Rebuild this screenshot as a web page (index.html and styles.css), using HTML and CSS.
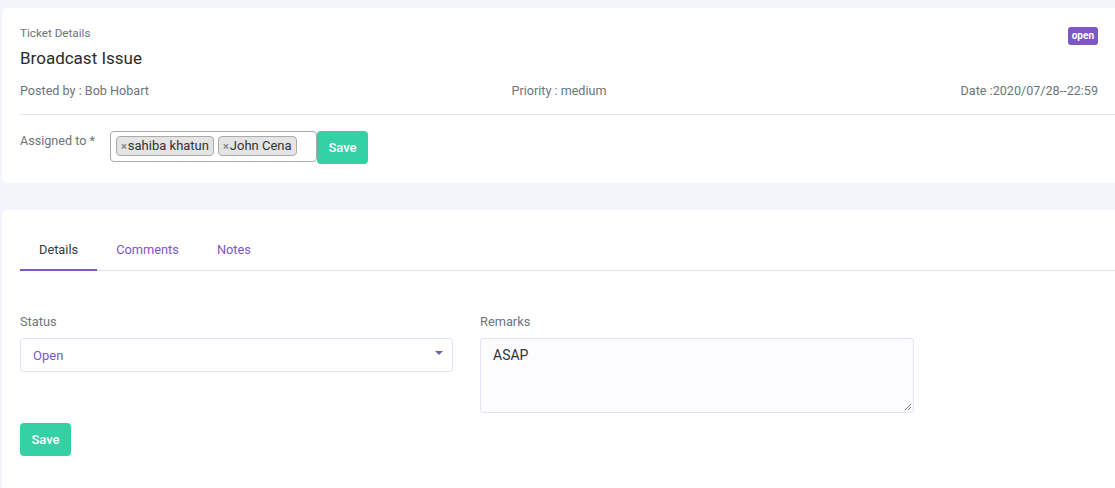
FILE: index.html
```html
<!DOCTYPE html>
<html>
<head>
<meta charset="utf-8">
<link rel="stylesheet" href="styles.css">
</head>
<body>
<div class="page">
  <section class="card ticket">
    <div class="ticket-head">
      <div>
        <div class="eyebrow">Ticket Details</div>
        <h1 class="title">Broadcast Issue</h1>
      </div>
      <span class="badge">open</span>
    </div>
    <div class="meta">
      <span>Posted by : Bob Hobart</span>
      <span class="meta-mid">Priority : medium</span>
      <span class="meta-right">Date :2020/07/28--22:59</span>
    </div>
    <div class="assign">
      <label class="assign-label">Assigned to *</label>
      <div class="multi">
        <span class="tag"><span class="x">×</span>sahiba khatun</span>
        <span class="tag"><span class="x">×</span>John Cena</span>
      </div>
      <button class="btn">Save</button>
    </div>
  </section>

  <section class="card detail">
    <nav class="tabs">
      <a class="tab active">Details</a>
      <a class="tab">Comments</a>
      <a class="tab">Notes</a>
    </nav>
    <div class="form">
      <div class="field">
        <label class="label">Status</label>
        <div class="select">
          <span>Open</span>
          <span class="caret"></span>
        </div>
      </div>
      <div class="field">
        <label class="label">Remarks</label>
        <div class="textarea">ASAP
          <svg class="grip" width="8" height="8" viewBox="0 0 8 8"><path d="M7 1L1 7M7 4L4 7" stroke="#777" stroke-width="1"/></svg>
        </div>
      </div>
    </div>
    <button class="btn">Save</button>
  </section>
</div>
</body>
</html>
```

FILE: styles.css
```css
* { box-sizing: border-box; }
html, body { margin: 0; padding: 0; }
body {
  background: #f4f5fa;
  font-family: Roboto, "Liberation Sans", Arial, sans-serif;
  color: #6c757d;
  font-size: 13px;
  height: 488px;
  overflow: hidden;
}
.page {
  padding: 8px 0 0 2px;
  display: flex;
  flex-direction: column;
  gap: 27px;
}
.card {
  background: #fff;
  border-radius: 5px 0 0 5px;
}
.ticket {
  padding: 18px 17px 0 18px;
  height: 175px;
}
.ticket-head {
  display: flex;
  justify-content: space-between;
  align-items: flex-start;
}
.eyebrow {
  font-size: 11.7px;
  line-height: 14px;
  color: #6c757d;
}
.title {
  margin: 8px 0 0;
  font-size: 17px;
  font-weight: 400;
  line-height: 20px;
  color: #2b2b2b;
}
.badge {
  margin-top: 1px;
  background: #7e57c2;
  color: #fff;
  font-size: 10px;
  font-weight: 700;
  line-height: 18px;
  height: 18px;
  padding: 0 4px;
  border-radius: 3px;
}
.meta {
  display: grid;
  grid-template-columns: 1fr auto 1fr;
  margin-top: 15px;
  font-size: 12.6px;
  line-height: 15px;
  padding-bottom: 16px;
  border-bottom: 1px solid #e5e5e8;
  margin-right: -17px;
  padding-right: 17px;
}
.meta-right { text-align: right; }
.assign {
  display: flex;
  align-items: flex-start;
  margin-top: 16px;
}
.assign-label {
  width: 90px;
  line-height: 18px;
  font-size: 12.6px;
  padding-top: 1px;
}
.multi {
  width: 207px;
  height: 31px;
  border: 1px solid #aaa;
  border-radius: 4px;
  padding: 4px 5px;
  display: flex;
  gap: 4px;
}
.tag {
  height: 20px;
  line-height: 18px;
  background: #e4e4e4;
  border: 1px solid #aaa;
  border-radius: 4px;
  padding: 0 4px 0 4px;
  color: #333;
  font-size: 13px;
}
.x {
  color: #888;
  font-weight: 700;
  font-size: 11px;
  margin-right: 1px;
}
.btn {
  background: #34d1a5;
  color: #fff;
  border: none;
  border-radius: 4px;
  font-family: inherit;
  font-size: 13px;
  font-weight: 500;
  width: 51px;
  height: 33px;
  padding: 0;
}
.detail {
  padding: 30px 0 31px 18px;
  height: 300px;
}
.tabs {
  display: flex;
  border-bottom: 1px solid #dee2e6;
}
.tab {
  padding: 1px 19px 0;
  line-height: 18px;
  font-size: 12.8px;
  color: #7e57c2;
  height: 31px;
  margin-bottom: -1px;
}
.tab.active {
  color: #343a40;
  border-bottom: 2px solid #7e57c2;
}
.form {
  display: flex;
  gap: 27px;
  margin-top: 43px;
}
.field {
  display: flex;
  flex-direction: column;
}
.label {
  line-height: 15px;
  font-size: 12.8px;
  margin-bottom: 9px;
}
.select {
  width: 433px;
  height: 34px;
  border: 1px solid #e2e3f6;
  border-radius: 3px;
  display: flex;
  align-items: center;
  justify-content: space-between;
  padding: 0 9px 0 12px;
  color: #7e57c2;
}
.caret {
  width: 0;
  height: 0;
  border-left: 4px solid transparent;
  border-right: 4px solid transparent;
  border-top: 4px solid #7e57c2;
  margin-top: -4px;
}
.textarea {
  position: relative;
  width: 434px;
  height: 75px;
  border: 1px solid #e2e3f6;
  border-radius: 3px;
  background: #fcfcff;
  padding: 7px 12px;
  color: #333;
  font-size: 14px;
  line-height: 18px;
}
.grip {
  position: absolute;
  right: 1px;
  bottom: 1px;
}
.detail > .btn {
  margin-top: 10px;
}
```
